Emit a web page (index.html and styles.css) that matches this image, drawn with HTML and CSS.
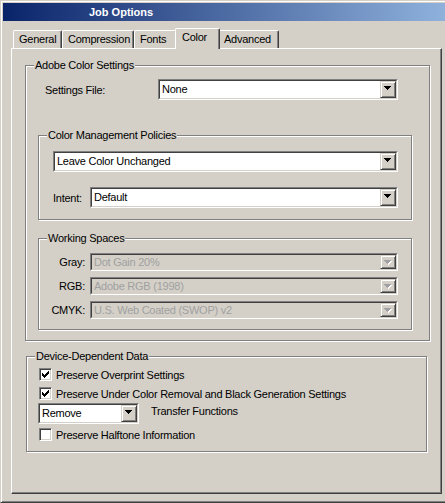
FILE: index.html
```html
<!DOCTYPE html>
<html>
<head>
<meta charset="utf-8">
<title>Job Options</title>
<link rel="stylesheet" href="styles.css">
</head>
<body>
<div class="window">
  <div class="titlebar">Job Options</div>
  <div class="tabs">
    <div class="tab tab-general">General</div>
    <div class="tab tab-compression">Compression</div>
    <div class="tab tab-fonts">Fonts</div>
    <div class="tab tab-color active">Color</div>
    <div class="tab tab-advanced">Advanced</div>
  </div>
  <div class="panel">
    <div class="group g-adobe">
      <div class="group-title">Adobe Color Settings</div>
      <div class="row settings-row">
        <span class="lbl-settings">Settings File:</span>
        <div class="combo w-settings"><div class="combo-in"><span class="combo-text">None</span><span class="combo-btn"><svg class="arrow" width="7" height="4" viewBox="0 0 7 4"><path d="M0 0h7v1H0zM1 1h5v1H1zM2 2h3v1H2zM3 3h1v1H3z"/></svg></span></div></div>
      </div>

      <div class="group g-cmp">
        <div class="group-title">Color Management Policies</div>
        <div class="combo w-policy"><div class="combo-in"><span class="combo-text">Leave Color Unchanged</span><span class="combo-btn"><svg class="arrow" width="7" height="4" viewBox="0 0 7 4"><path d="M0 0h7v1H0zM1 1h5v1H1zM2 2h3v1H2zM3 3h1v1H3z"/></svg></span></div></div>
        <div class="row intent-row">
          <span class="lbl-intent">Intent:</span>
          <div class="combo w-308"><div class="combo-in"><span class="combo-text">Default</span><span class="combo-btn"><svg class="arrow" width="7" height="4" viewBox="0 0 7 4"><path d="M0 0h7v1H0zM1 1h5v1H1zM2 2h3v1H2zM3 3h1v1H3z"/></svg></span></div></div>
        </div>
      </div>

      <div class="group g-ws">
        <div class="group-title">Working Spaces</div>
        <div class="row ws-row first">
          <span class="lbl-ws">Gray:</span>
          <div class="combo disabled w-308"><div class="combo-in"><span class="combo-text">Dot Gain 20%</span><span class="combo-btn"><svg class="arrow" width="8" height="5" viewBox="0 0 8 5"><path class="hl" d="M1 1h7v1H1zM2 2h5v1H2zM3 3h3v1H3zM4 4h1v1H4z"/><path d="M0 0h7v1H0zM1 1h5v1H1zM2 2h3v1H2zM3 3h1v1H3z"/></svg></span></div></div>
        </div>
        <div class="row ws-row">
          <span class="lbl-ws">RGB:</span>
          <div class="combo disabled w-308"><div class="combo-in"><span class="combo-text">Adobe RGB (1998)</span><span class="combo-btn"><svg class="arrow" width="8" height="5" viewBox="0 0 8 5"><path class="hl" d="M1 1h7v1H1zM2 2h5v1H2zM3 3h3v1H3zM4 4h1v1H4z"/><path d="M0 0h7v1H0zM1 1h5v1H1zM2 2h3v1H2zM3 3h1v1H3z"/></svg></span></div></div>
        </div>
        <div class="row ws-row">
          <span class="lbl-ws">CMYK:</span>
          <div class="combo disabled w-308"><div class="combo-in"><span class="combo-text">U.S. Web Coated (SWOP) v2</span><span class="combo-btn"><svg class="arrow" width="8" height="5" viewBox="0 0 8 5"><path class="hl" d="M1 1h7v1H1zM2 2h5v1H2zM3 3h3v1H3zM4 4h1v1H4z"/><path d="M0 0h7v1H0zM1 1h5v1H1zM2 2h3v1H2zM3 3h1v1H3z"/></svg></span></div></div>
        </div>
      </div>
    </div>

    <div class="group g-dev">
      <div class="group-title">Device-Dependent Data</div>
      <div class="check-row r1">
        <span class="check"><svg width="7" height="7" viewBox="0 0 7 7"><path d="M6 0h1v1H6zM5 1h2v1H5zM0 2h1v1H0zM4 2h3v1H4zM0 3h2v1H0zM3 3h3v1H3zM0 4h5v1H0zM1 5h3v1H1zM2 6h1v1H2z"/></svg></span>
        <span>Preserve Overprint Settings</span>
      </div>
      <div class="check-row r2">
        <span class="check"><svg width="7" height="7" viewBox="0 0 7 7"><path d="M6 0h1v1H6zM5 1h2v1H5zM0 2h1v1H0zM4 2h3v1H4zM0 3h2v1H0zM3 3h3v1H3zM0 4h5v1H0zM1 5h3v1H1zM2 6h1v1H2z"/></svg></span>
        <span>Preserve Under Color Removal and Black Generation Settings</span>
      </div>
      <div class="row transfer-row">
        <div class="combo w-remove"><div class="combo-in"><span class="combo-text">Remove</span><span class="combo-btn"><svg class="arrow" width="7" height="4" viewBox="0 0 7 4"><path d="M0 0h7v1H0zM1 1h5v1H1zM2 2h3v1H2zM3 3h1v1H3z"/></svg></span></div></div>
        <span class="transfer-lbl">Transfer Functions</span>
      </div>
      <div class="check-row r3">
        <span class="check"></span>
        <span>Preserve Halftone Information</span>
      </div>
    </div>
  </div>
</div>
</body>
</html>
```

FILE: styles.css
```css
* { box-sizing: border-box; }
html, body { margin: 0; padding: 0; overflow: hidden; }
body {
  background: #d4d0c8;
  font-family: "Liberation Sans", Arial, sans-serif;
  font-size: 11px;
  letter-spacing: -0.25px;
  color: #000;
}

.window {
  width: 445px;
  height: 503px;
  border-top: 1px solid #d4d0c8;
  border-left: 1px solid #d4d0c8;
  border-bottom: 1px solid #404040;
  box-shadow: inset 1px 1px 0 #fff, inset 0 -1px 0 #808080;
  padding: 2px 0 2px 2px;
}

.titlebar {
  height: 18px;
  line-height: 18px;
  padding-left: 86px;
  background: linear-gradient(to right, #0a246a 0, #a6caf0 520px);
  color: #fff;
  font-weight: bold;
  letter-spacing: 0;
}

/* tabs */
.tabs {
  display: flex;
  align-items: flex-end;
  height: 20px;
  margin-top: 7px;
  padding-left: 10px;
}
.tab {
  height: 18px;
  line-height: 17px;
  padding-left: 5px;
  border-top: 1px solid #fff;
  border-left: 1px solid #fff;
  border-right: 1px solid #404040;
  border-radius: 2px 2px 0 0;
  box-shadow: inset -1px 0 0 #808080;
  background: #d4d0c8;
  white-space: nowrap;
  overflow: hidden;
}
.tab-general { width: 49px; }
.tab-compression { width: 72px; }
.tab-fonts { width: 43px; }
.tab-color { width: 45px; }
.tab-advanced { width: 61px; }
.tab.active {
  height: 21px;
  margin: 0 -2px -1px -2px;
  padding-left: 6px;
  position: relative;
  z-index: 2;
}

/* panel */
.panel {
  margin-left: 8px;
  width: 431px;
  height: 446px;
  border-top: 1px solid #fff;
  border-left: 1px solid #fff;
  border-right: 1px solid #404040;
  border-bottom: 1px solid #404040;
  box-shadow: inset -1px -1px 0 #808080;
}

/* group boxes */
.group {
  border: 1px solid #808080;
  box-shadow: inset 1px 1px 0 #fff, 1px 1px 0 #fff;
}
.group-title {
  width: fit-content;
  height: 13px;
  line-height: 13px;
  margin: -7px 0 0 8px;
  padding: 0 1px;
  background: #d4d0c8;
  white-space: nowrap;
}

.row { display: flex; align-items: center; }

.g-adobe { margin: 16px 0 0 13px; width: 405px; padding-bottom: 10px; }
.settings-row { margin: 7px 0 0 19px; height: 21px; }
.lbl-settings { width: 113px; flex: none; }

.g-cmp { margin: 35px 0 0 12px; width: 374px; padding-bottom: 11px; }
.w-policy { margin: 9px 0 0 14px; width: 345px; }
.intent-row { margin: 15px 0 0 14px; }
.lbl-intent { width: 37px; flex: none; }

.g-ws { margin: 18px 0 0 12px; width: 374px; padding-bottom: 10px; }
.ws-row { margin-top: 6px; }
.ws-row.first { margin-top: 8px; }
.lbl-ws { width: 46px; margin-right: 5px; text-align: right; flex: none; }

.g-dev { margin: 15px 0 0 14px; width: 401px; padding-bottom: 10px; }

/* combo boxes */
.combo {
  flex: none;
  height: 21px;
  border: 1px solid;
  border-color: #808080 #fff #fff #808080;
  background: #fff;
}
.combo-in {
  height: 100%;
  display: flex;
  border: 1px solid;
  border-color: #404040 #d4d0c8 #d4d0c8 #404040;
}
.combo-text {
  flex: 1;
  min-width: 0;
  padding-left: 2px;
  line-height: 17px;
  white-space: nowrap;
  overflow: hidden;
}
.combo-btn {
  flex: none;
  width: 16px;
  height: 100%;
  background: #d4d0c8;
  border: 1px solid;
  border-color: #d4d0c8 #404040 #404040 #d4d0c8;
  box-shadow: inset 1px 1px 0 #fff, inset -1px -1px 0 #808080;
}
.arrow { display: block; margin: 4px 0 0 3px; shape-rendering: crispEdges; fill: #000; }
.combo.disabled { height: 18px; background: #d4d0c8; color: #a0a0a0; }
.combo.disabled .combo-text { line-height: 14px; }
.combo.disabled .arrow { fill: #a0a0a0; }
.combo.disabled .arrow .hl { fill: #fff; }

.w-settings { width: 240px; }
.w-308 { width: 308px; }
.w-remove { width: 101px; }

/* device-dependent */
.check-row {
  display: flex;
  align-items: center;
  gap: 4px;
  height: 13px;
  margin-left: 12px;
  white-space: nowrap;
}
.r1 { margin-top: 5px; }
.r2 { margin-top: 6px; }
.r3 { margin-top: 4px; }
.check {
  flex: none;
  width: 13px;
  height: 13px;
  border: 1px solid;
  border-color: #808080 #fff #fff #808080;
  box-shadow: inset 1px 1px 0 #404040, inset -1px -1px 0 #d4d0c8;
  background: #fff;
  padding: 2px 0 0 2px;
}
.check svg { display: block; shape-rendering: crispEdges; fill: #000; }

.transfer-row { margin: 3px 0 0 11px; }
.transfer-lbl { margin-left: 12px; margin-top: -5px; }
```
